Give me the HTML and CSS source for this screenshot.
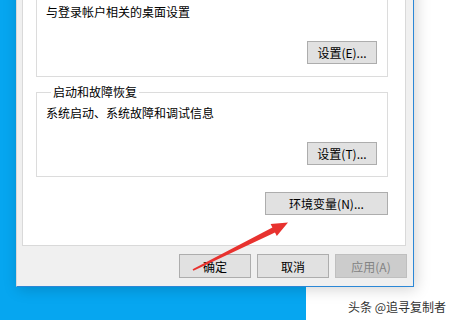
FILE: index.html
```html
<!DOCTYPE html>
<html lang="zh-CN">
<head>
  <meta charset="UTF-8">
  <title>系统属性 - 高级</title>
  <link rel="stylesheet" href="styles.css">
</head>
<body>

  <div class="dialog">
    <div class="panel">
      <div class="group group-first">
        <p class="desc">与登录帐户相关的桌面设置</p>
        <div class="row">
          <button class="btn">设置(E)...</button>
        </div>
      </div>

      <fieldset class="group">
        <legend>启动和故障恢复</legend>
        <p class="desc">系统启动、系统故障和调试信息</p>
        <div class="row">
          <button class="btn">设置(T)...</button>
        </div>
      </fieldset>

      <div class="row env-row">
        <button class="btn btn-wide">环境变量(N)...</button>
      </div>
    </div>

    <div class="row actions">
      <button class="btn btn-action">确定</button>
      <button class="btn btn-action">取消</button>
      <button class="btn btn-action" disabled>应用(A)</button>
    </div>
  </div>

  <!-- flèche rouge ajoutée sur la capture -->
  <svg class="arrow" width="450" height="320" viewBox="0 0 450 320">
    <polygon fill="#e8322f" points="192.6,269.3 272.4,227.6 270.6,224 288,222.5 276.8,236 275,232.4 193.4,270.7"/>
  </svg>

  <div class="watermark">头条 @追寻复制者</div>

</body>
</html>
```

FILE: styles.css
```css
* {
  box-sizing: border-box;
}

html, body {
  height: 320px;
  overflow: hidden;
}

body {
  margin: 0;
  position: relative;
  font-family: "Noto Sans CJK SC", "Microsoft YaHei", sans-serif;
  font-size: 12px;
  color: #000;
  background: linear-gradient(to right, #06a6f0 306px, #ffffff 306px);
}

.dialog {
  width: 398px;
  margin-left: 16px;
  padding: 0 7px 8px 5px;
  background: #f0f0f0;
  border-left: 1px solid #d8d8d8;
  border-right: 1px solid #2b87d6;
  border-bottom: 1px solid #2b87d6;
  box-shadow: 2px 2px 14px rgba(0, 0, 0, 0.18);
}

.panel {
  background: #fff;
  border: 1px solid #d9d9d9;
  border-top: none;
  padding: 0 17px 30px 13px;
}

.group {
  margin: 7px 0 0;
  border: 1px solid #dcdcdc;
  padding: 5px 10px 11px 9px;
  min-width: 0;
}

.group-first {
  margin-top: -20px;
  padding-top: 23px;
  padding-bottom: 12px;
}

.group legend {
  margin-left: 5px;
  padding: 0 2px;
  line-height: 16px;
}

.desc {
  margin: 0;
  line-height: 16px;
}

.row {
  display: flex;
  justify-content: flex-end;
  margin-top: 21px;
}

.btn {
  font-family: inherit;
  font-size: 12px;
  color: #000;
  width: 70px;
  height: 23px;
  padding: 0;
  background: #e1e1e1;
  border: 1px solid #adadad;
}

.btn-wide {
  width: 123px;
  height: 23px;
}

.env-row {
  margin-top: 15px;
}

.actions {
  gap: 6px;
  margin-top: 8px;
  margin-right: -1px;
}

.btn-action {
  width: 72px;
  height: 24px;
}

.btn:disabled {
  background: #cccccc;
  border-color: #bfbfbf;
  color: #838383;
}

.arrow {
  position: absolute;
  left: 0;
  top: 0;
  pointer-events: none;
}

.watermark {
  position: absolute;
  left: 348px;
  top: 299px;
  font-size: 12px;
  line-height: 16px;
  white-space: nowrap;
  color: #333;
}
```
